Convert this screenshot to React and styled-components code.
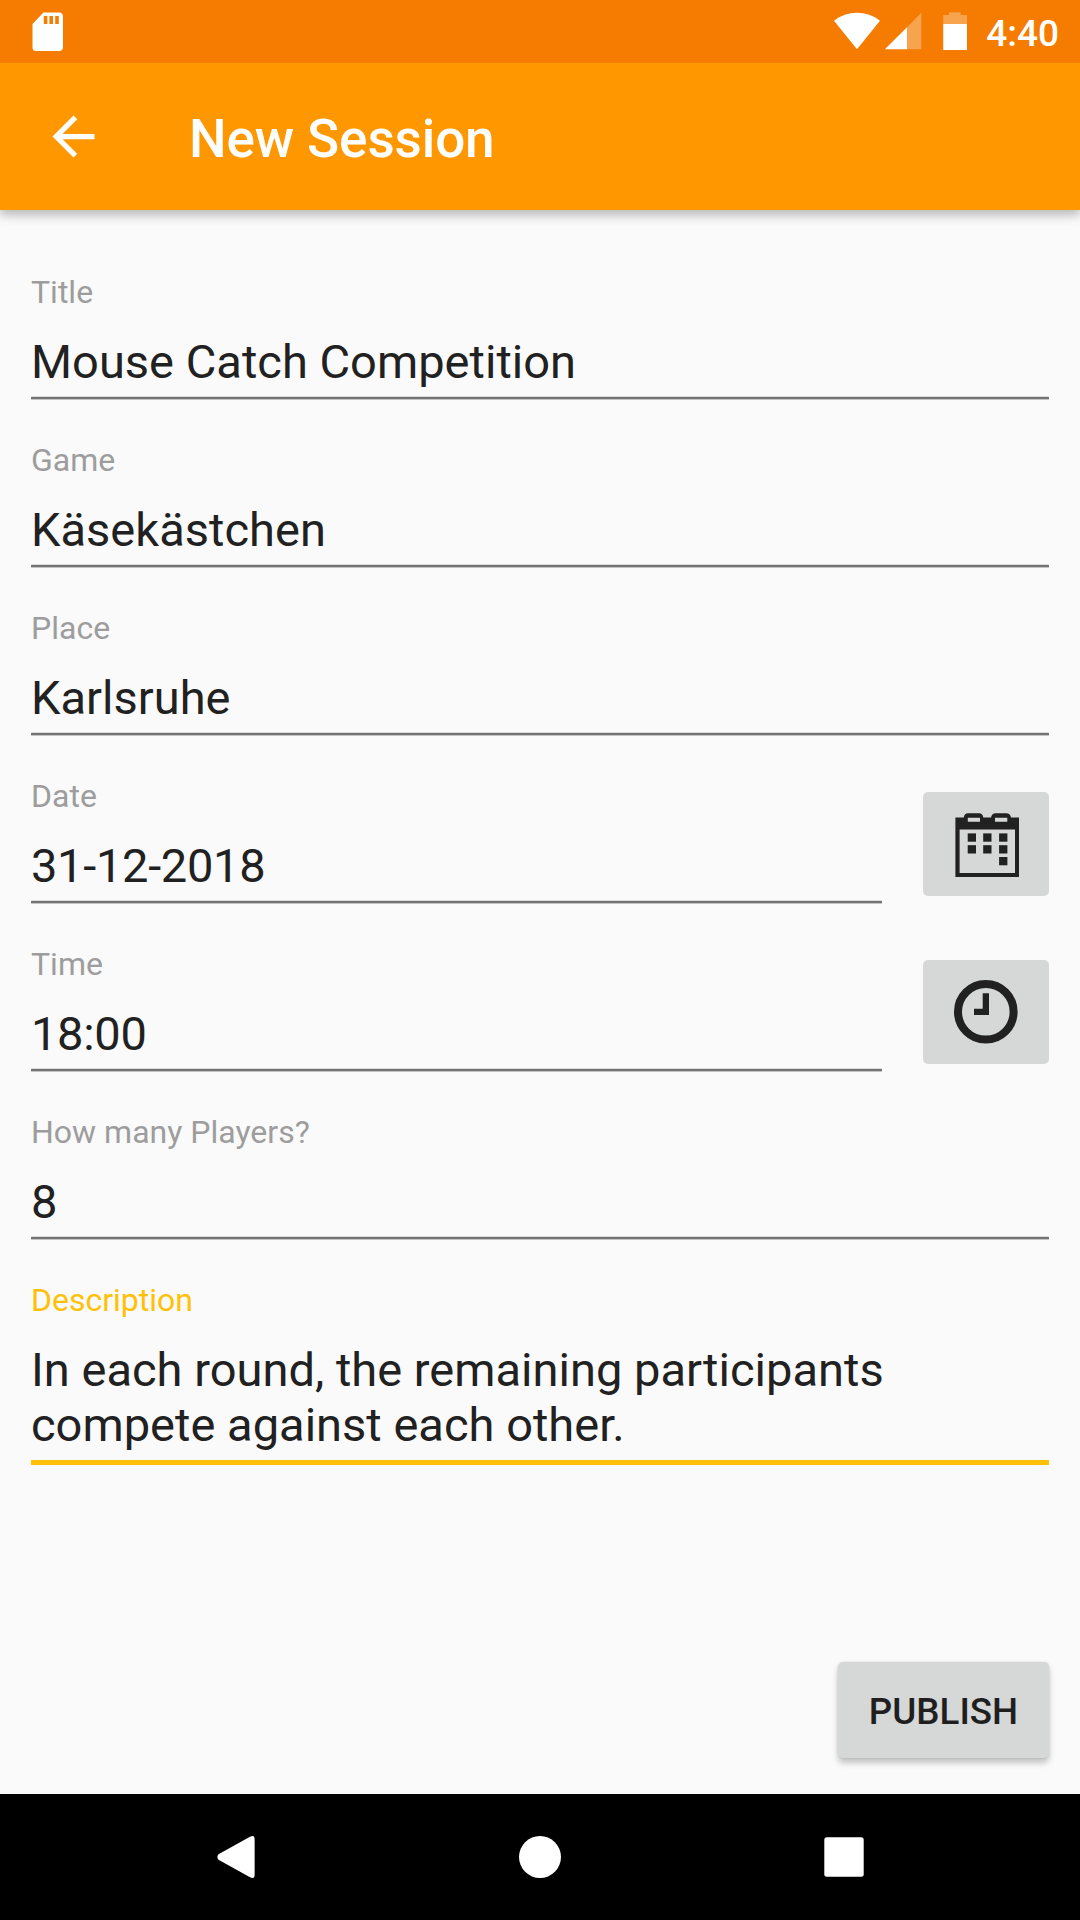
import React from "react";
import styled, { createGlobalStyle } from "styled-components";

const GlobalStyle = createGlobalStyle`
  * { box-sizing: border-box; }
  body {
    margin: 0;
    background: #fafafa;
    font-family: Roboto, "Noto Sans", sans-serif;
  }
  svg { display: block; flex: none; }
`;

const Screen = styled.div`
  display: flex;
  flex-direction: column;
  width: 1080px;
  height: 1920px;
  overflow: hidden;
  background: #fafafa;
  color: #212121;
`;

const StatusBar = styled.div`
  position: relative;
  z-index: 1;
  display: flex;
  align-items: center;
  justify-content: space-between;
  height: 63px;
  flex: none;
  padding: 0 21px 0 32px;
  background: #f57c00;
`;

const StatusIcons = styled.div`
  display: flex;
  align-items: center;
  height: 63px;
`;

const Clock = styled.span`
  margin-left: 19px;
  font-size: 37px;
  font-weight: 500;
  line-height: 43px;
  color: #fff;
  padding-top: 3px;
`;

const AppBar = styled.header`
  display: flex;
  align-items: center;
  gap: 84px;
  height: 147px;
  flex: none;
  padding: 0 42px;
  background: #ff9800;
  box-shadow: 0 5px 10px rgba(0, 0, 0, 0.27);
`;

const BackButton = styled.button`
  display: flex;
  padding: 0;
  border: 0;
  background: none;
`;

const AppTitle = styled.h1`
  margin: 0;
  padding-top: 5px;
  font-size: 53px;
  font-weight: 500;
  line-height: 62px;
  letter-spacing: -0.1px;
  color: #fff;
`;

const Form = styled.main`
  display: flex;
  flex-direction: column;
  flex: 1;
  gap: 42px;
  padding: 64px 31px 36px;
`;

const FieldRow = styled.div`
  display: flex;
  align-items: flex-start;
  gap: 41px;
  height: 126px;
`;

const Field = styled.div`
  display: flex;
  flex-direction: column;
  flex: 1;
`;

const Label = styled.span`
  margin-bottom: 23px;
  font-size: 32px;
  line-height: 37px;
  color: ${({ $active }) => ($active ? "#ffc107" : "#9d9d9d")};
`;

const Value = styled.div`
  font-size: 47px;
  line-height: 55px;
  letter-spacing: ${({ $numeric }) => ($numeric ? "-0.3px" : "0.02px")};
  color: #212121;
`;

const Underline = styled.div`
  margin-top: 7px;
  height: 4px;
  background: #747474;
  border-top: 1px solid #dcdcdc;
  border-bottom: 1px solid #c4c4c4;
`;

const ActiveUnderline = styled.div`
  margin-top: 8px;
  height: 5px;
  background: #ffc107;
`;

const IconButton = styled.button`
  display: flex;
  width: 126px;
  height: 104px;
  margin-top: 14px;
  padding: 0;
  border: 0;
  border-radius: 5px;
  background: #d6d7d7;
`;

const PublishButton = styled.button`
  align-self: flex-end;
  width: 211px;
  height: 96px;
  margin-top: auto;
  padding: 2px 0 0;
  border: 0;
  border-radius: 5px;
  background: #d6d7d7;
  box-shadow: 0 5px 6px rgba(0, 0, 0, 0.22), 0 0 3px rgba(0, 0, 0, 0.1);
  font: 500 36.75px/43px Roboto, "Noto Sans", sans-serif;
  color: #1f1f1f;
`;

const NavBar = styled.nav`
  display: flex;
  align-items: center;
  justify-content: space-between;
  height: 126px;
  flex: none;
  padding: 0 215px;
  background: #000;
`;

const SdCardIcon = () => (
  <svg width="31" height="63" viewBox="0 0 31 63" fill="#fff">
    <path
      fillRule="evenodd"
      d="M11.5 12.5H27a4 4 0 0 1 4 4V47a4 4 0 0 1-4 4H4a3.5 3.5 0 0 1-3.5-3.5V24zM11.8 16v8h3.6v-8zM17.4 16v8H21v-8zM23.2 16v8h3.6v-8z"
    />
  </svg>
);

const WifiIcon = () => (
  <svg width="46" height="63" viewBox="0 0 46 63" fill="#fff">
    <path d="M0 20.8C6.500 15.500 14.500 12.700 23 12.700S39.500 15.500 46 20.800L23 49.300z" />
  </svg>
);

const SignalIcon = () => (
  <svg width="46" height="63" viewBox="0 0 46 63" fill="#fff">
    <path opacity="0.3" d="M27 27.300L41.300 12.800V49.300H27z" />
    <path d="M4.800 49.300L27 27.300V49.300z" />
  </svg>
);

const BatteryIcon = () => (
  <svg width="41" height="63" viewBox="0 0 41 63" fill="#fff">
    <path opacity="0.3" d="M17.200 24V15H23V12.200H34.600V15H41V24z" />
    <path d="M17.200 24H41V50H17.200z" />
  </svg>
);

const ArrowBackIcon = () => (
  <svg width="63" height="63" viewBox="0 0 24 24" fill="#fff">
    <path d="M20 11H7.830l5.590-5.590L12 4l-8 8 8 8 1.410-1.410L7.830 13H20v-2z" />
  </svg>
);

const CALENDAR_DAYS = [
  [44.7, 41.4],
  [60.200, 41.4],
  [76.100, 41.4],
  [44.700, 53.200],
  [60.200, 53.200],
  [76.100, 53.200],
  [76.100, 65],
];

const CalendarIcon = () => (
  <svg width="126" height="104" viewBox="0 0 126 104" fill="#212121">
    <path
      fillRule="evenodd"
      d="M32.400 25.400H40.800Q41.500 21.300 45 21.300H56Q59.500 21.300 60.300 25.400H68Q69 21.300 72.500 21.300H83.500Q87 21.300 88 25.400H96V85H32.400zM36.600 37.500V81H92V37.500zM44.800 25.800V29.800H57V25.800zM72 25.800V29.800H84.300V25.800z"
    />
    {CALENDAR_DAYS.map(([x, y]) => (
      <rect key={`${x}-${y}`} x={x} y={y} width="8.300" height="8.300" />
    ))}
  </svg>
);

const ClockIcon = () => (
  <svg width="126" height="104" viewBox="0 0 126 104">
    <circle cx="62.800" cy="51.800" r="27.800" fill="none" stroke="#212121" strokeWidth="8" />
    <path fill="#212121" d="M59.700 33.300H66V55H51V48.700H59.700z" />
  </svg>
);

const NavBackIcon = () => (
  <svg width="42" height="42" viewBox="0 0 42 42" fill="#fff">
    <path d="M3.500 18.200L35 .8Q39.600-1.400 39.600 3V39Q39.600 43.400 35 41.200L3.500 23.800Q1.200 21 3.500 18.200z" />
  </svg>
);

const NavHomeIcon = () => (
  <svg width="42" height="42" viewBox="0 0 42 42" fill="#fff">
    <circle cx="21" cy="21" r="21" />
  </svg>
);

const NavRecentsIcon = () => (
  <svg width="42" height="42" viewBox="0 0 42 42" fill="#fff">
    <rect x="1.300" y="1.200" width="39.400" height="39.600" rx="2.500" />
  </svg>
);

const FIELDS = [
  { label: "Title", value: "Mouse Catch Competition" },
  { label: "Game", value: "Käsekästchen" },
  { label: "Place", value: "Karlsruhe" },
  { label: "Date", value: "31-12-2018", numeric: true, Icon: CalendarIcon },
  { label: "Time", value: "18:00", numeric: true, Icon: ClockIcon },
  { label: "How many Players?", value: "8", numeric: true },
];

export default function App() {
  return (
    <Screen>
      <GlobalStyle />
      <StatusBar>
        <SdCardIcon />
        <StatusIcons>
          <WifiIcon />
          <SignalIcon />
          <BatteryIcon />
          <Clock>4:40</Clock>
        </StatusIcons>
      </StatusBar>
      <AppBar>
        <BackButton aria-label="Back">
          <ArrowBackIcon />
        </BackButton>
        <AppTitle>New Session</AppTitle>
      </AppBar>
      <Form>
        {FIELDS.map(({ label, value, numeric, Icon }) => (
          <FieldRow key={label}>
            <Field>
              <Label>{label}</Label>
              <Value $numeric={numeric}>{value}</Value>
              <Underline />
            </Field>
            {Icon && (
              <IconButton aria-label={label}>
                <Icon />
              </IconButton>
            )}
          </FieldRow>
        ))}
        <Field>
          <Label $active>Description</Label>
          <Value>
            In each round, the remaining participants
            <br />
            compete against each other.
          </Value>
          <ActiveUnderline />
        </Field>
        <PublishButton>PUBLISH</PublishButton>
      </Form>
      <NavBar>
        <NavBackIcon />
        <NavHomeIcon />
        <NavRecentsIcon />
      </NavBar>
    </Screen>
  );
}
